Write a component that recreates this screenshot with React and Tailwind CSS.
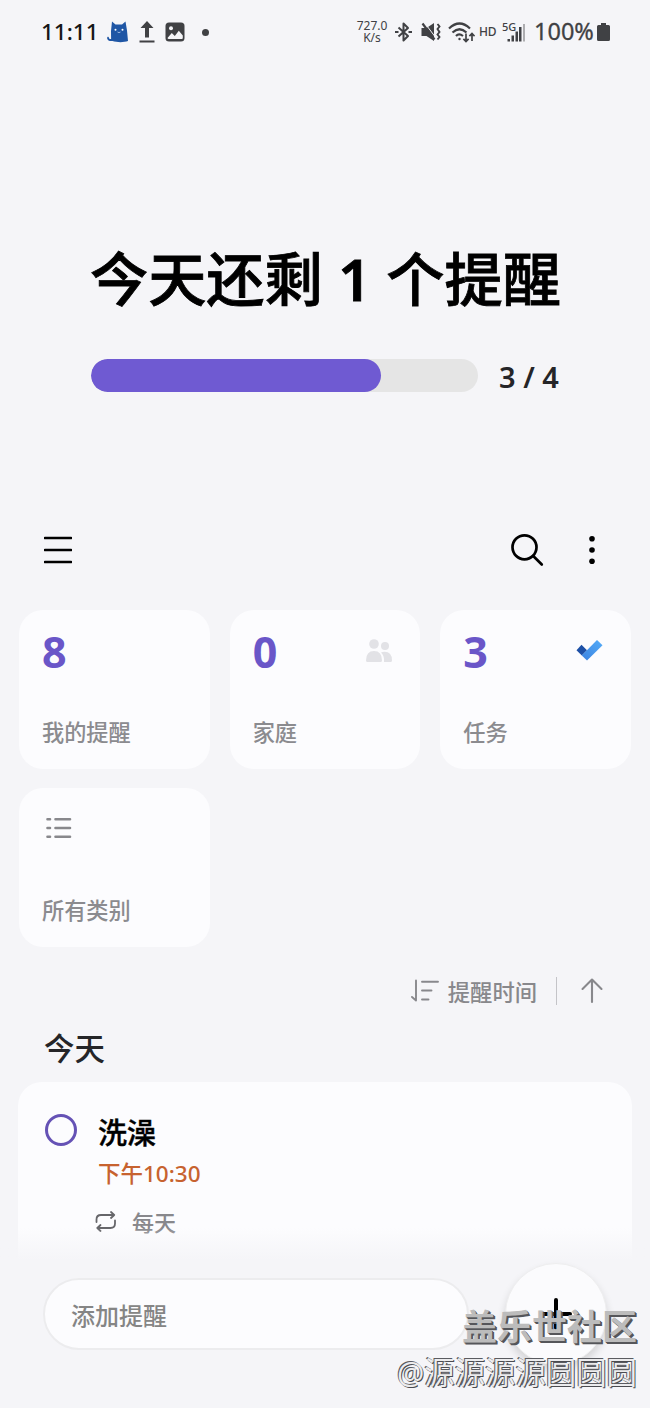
import { useState } from 'react';

const categories = [
  { id: 'mine', label: '我的提醒', count: 8 },
  { id: 'family', label: '家庭', count: 0, icon: 'people' },
  { id: 'tasks', label: '任务', count: 3, icon: 'todo' },
  { id: 'all', label: '所有类别' },
];

function CatIcon() {
  return (
    <svg width="22" height="22" viewBox="0 0 22 22" className="ml-[9px] text-[#1f56a5]">
      <path d="M5 0.500 8.500 3.500h6.500L18.500.5l1.500 9 1 10.500c-4 1.500-11 1.500-15.500 0-3 .2-5-.4-5.400-2.800.1-1.600 1.700-1.800 1.800-.5 0 .9.700 1.300 2.200 1.300L4 10z" fill="currentColor" />
      <circle cx="8.500" cy="8.700" r="1" fill="#fff" />
      <circle cx="15.500" cy="8.700" r="1" fill="#fff" />
      <path d="M10.500 11q1.500 1.300 3 0" stroke="#b9cdec" strokeWidth="0.8" fill="none" />
    </svg>
  );
}

function StatusBar() {
  return (
    <header className="flex h-16 items-center pr-[40px] pl-[41px] text-[#404144]">
      <span className="w-[57px] text-[22.500px] leading-none font-medium whitespace-nowrap text-[#161616]">11:11</span>
      <CatIcon />
      {/* upload */}
      <svg width="18" height="22" viewBox="0 0 18 22" className="ml-[9px]" fill="currentColor">
        <path d="M9 0 15.500 7h-4.500v9.500H7V7H2.500zM1.500 19.400h15v2h-15z" />
      </svg>
      {/* gallery */}
      <svg width="20" height="20" viewBox="0 0 20 20" className="ml-[9px]">
        <rect x="0.5" y="0.5" width="19" height="19" rx="3.5" fill="currentColor" />
        <circle cx="6" cy="6.300" r="2" fill="#f5f5f8" />
        <path d="m2.500 16 4.300-5 3 3 4-5.300 4 4.800V16q0 1-1 1h-13q-1 0-1.300-1z" fill="#f5f5f8" />
      </svg>
      <span className="ml-[17px] size-[7px] rounded-full bg-[#404144]" />

      <div className="ml-auto flex items-center">
        <div className="flex w-8 flex-col items-center text-[12px] leading-[12px]">
          <span>727.0</span>
          <span>K/s</span>
        </div>
        {/* bluetooth */}
        <svg width="17" height="20" viewBox="0 0 17 20" className="ml-[7px]" fill="none" stroke="currentColor" strokeWidth="2" strokeLinejoin="round">
          <path d="M3.500 5.500 13 14l-4.500 4.500v-17L13 6l-9.500 8.500" />
          <path d="M0 10h3.500M13.500 10H17" />
        </svg>
        {/* muted with vibration */}
        <svg width="20" height="20" viewBox="0 0 20 20" className="ml-[9px]" fill="currentColor">
          <path d="M0.500 6h5L13 1v18l-7.500-5h-5z" />
          <path d="m3 0 12 16" stroke="#f5f5f8" strokeWidth="1" />
          <path d="m1.500 1.500 12 16" stroke="currentColor" strokeWidth="2.200" />
          <path d="m16.500 2 2 2.500-2 2.500 2 3-2 2.500 2 2.500-2 2.500" fill="none" stroke="currentColor" strokeWidth="1.900" />
        </svg>
        {/* wifi with traffic arrows */}
        <svg width="27" height="21" viewBox="0 0 27 21" className="ml-[7px]" fill="none" stroke="currentColor" strokeWidth="2.200">
          <path d="M1 6.500q10.500-10 21 0M4.500 10.500q7-6.500 14 0M8 14q3-3.200 7 0" />
          <circle cx="11.500" cy="17" r="1.200" fill="currentColor" stroke="none" />
          <path d="M18 11.500v8m-2.600-2.700 2.600 2.700 2.600-2.700M24 19v-7.500m-2.600 2.700 2.600-2.700 2.600 2.700" strokeWidth="1.700" />
        </svg>
        <span className="ml-[4px] w-[17px] text-[12px] leading-none font-medium tracking-[-0.3px]">HD</span>
        <div className="relative ml-[6px] h-[22px] w-6">
          <span className="absolute top-0 left-0 text-[11px] leading-none font-medium">5G</span>
          <svg width="24" height="22" viewBox="0 0 24 22" fill="currentColor">
            <path d="M5.500 18h2.500v2.500H5.500zM9.500 14.500H12v6H9.500zM13.500 10.500H16v10h-2.500zM17 6h2.500v14.500H17z" />
            <path d="M21 3h2v17.500h-2z" opacity="0.4" />
          </svg>
        </div>
        <span className="ml-[8px] w-[61px] text-[23.500px] leading-none whitespace-nowrap [-webkit-text-stroke:0.3px]">100%</span>
        <svg width="13" height="18" viewBox="0 0 13 18" className="ml-[2px]" fill="currentColor">
          <path d="M4 0h5v2h2.500Q13 2 13 3.500v13Q13 18 11.500 18h-10Q0 18 0 16.500v-13Q0 2 1.500 2H4z" />
        </svg>
      </div>
    </header>
  );
}

function CategoryIcon({ name }) {
  if (name === 'people') {
    return (
      <svg width="26" height="24" viewBox="0 0 26 24" className="mt-[4px] mr-[4px]" fill="#e2e2e6">
        <circle cx="8" cy="5" r="4.800" />
        <circle cx="19" cy="7" r="4" />
        <path d="M0 21.500q0-9.500 8-9.500t8 9.500q0 1.500-1.500 1.500h-13Q0 23 0 21.500zM15 13.500q1.500-.8 3.500-.8 7.500 0 7.500 8.800 0 1.500-1.500 1.500H18v-2q0-5-3-7.500z" />
      </svg>
    );
  }
  if (name === 'todo') {
    return (
      <svg width="27" height="22" viewBox="0 0 27 22" className="mt-[4px] mr-[4px]">
        <defs>
          <linearGradient id="todo" x1="0" y1="1" x2="1" y2="0">
            <stop offset="0" stopColor="#3b82e0" />
            <stop offset="1" stopColor="#54acf8" />
          </linearGradient>
        </defs>
        <path d="M5.500 5.800 11 11.300l-5.200 5.200L.5 11.200z" fill="#1d50a6" />
        <path d="M5.800 16.400 21 1l5.500 5.300L11 21.500z" fill="url(#todo)" />
      </svg>
    );
  }
  return null;
}

function CategoryCard({ item }) {
  return (
    <button className="flex h-[159px] flex-col justify-between rounded-[24px] bg-[#fcfcfe] pt-[25px] pr-6 pb-[22px] pl-[23px] text-left">
      <div className="flex w-full items-start justify-between">
        {item.count !== undefined ? (
          <span className="text-[43px] leading-[34px] font-bold text-[#6a56c8]">{item.count}</span>
        ) : (
          <svg width="26" height="22" viewBox="0 0 26 22" className="mt-1 ml-[4px]" stroke="#88888c" strokeWidth="2.600" strokeLinecap="round">
            <path d="M1.500 2.300h2.500M1.500 11h2.500M1.500 19.700h2.500M9.500 2.300h14.500M9.500 11h14.500M9.500 19.700h14.500" />
          </svg>
        )}
        <CategoryIcon name={item.icon} />
      </div>
      <span className="text-[22.200px] leading-7 font-medium text-[#8b8b8f]">{item.label}</span>
    </button>
  );
}

export default function App() {
  const [done, setDone] = useState(false);
  const completed = 3;
  const total = 4;

  return (
    <div className="relative flex h-[1408px] w-[650px] flex-col overflow-hidden bg-[#f5f5f8] font-['Noto_Sans','Noto_Sans_CJK_SC',sans-serif]">
      <StatusBar />

      <section className="flex h-[453px] flex-col pt-[180px] pr-[88px] pl-[90px]">
        <h1 className="text-[58.200px] leading-[70px] font-medium whitespace-nowrap text-black [-webkit-text-stroke:0.8px_#000]">
          今天还剩 <span className="font-semibold">1</span> 个提醒
        </h1>
        <div className="mt-[45px] ml-px flex h-[33px] items-center">
          <div className="h-[33px] w-[387px] overflow-hidden rounded-full bg-[#e5e5e5]">
            <div className="h-full rounded-full bg-[#6f5ad2]" style={{ width: `${(completed / total) * 100}%` }} />
          </div>
          <span className="mt-[2px] ml-[21px] text-[29px] leading-8 font-semibold whitespace-nowrap text-[#252528]">3 / 4</span>
        </div>
      </section>

      <nav className="flex h-[66px] items-center pr-[52px] pl-[44px]">
        <svg width="28" height="28" viewBox="0 0 28 28" stroke="#000" strokeWidth="2.600" strokeLinecap="round">
          <path d="M1 2h26M1 14h26M1 26h26" />
        </svg>
        <svg width="34" height="34" viewBox="0 0 34 34" className="ml-auto" fill="none" stroke="#000" strokeWidth="2.700" strokeLinecap="round">
          <circle cx="14.500" cy="14.300" r="12" />
          <path d="m23.200 23 8.600 8.500" />
        </svg>
        <svg width="14" height="30" viewBox="0 0 14 30" className="mr-[-1px] ml-[41px]" fill="#000">
          <circle cx="7" cy="3.700" r="2.800" />
          <circle cx="7" cy="15" r="2.800" />
          <circle cx="7" cy="26.300" r="2.800" />
        </svg>
      </nav>

      <section className="mt-[27px] grid grid-cols-3 gap-x-5 gap-y-[19px] px-[19px]">
        {categories.map((item) => (
          <CategoryCard key={item.id} item={item} />
        ))}
      </section>

      <div className="mt-[24px] flex h-10 items-center justify-end pr-[47px] text-[#88888c]">
        <svg width="28" height="24" viewBox="0 0 28 24" fill="none" stroke="currentColor" strokeWidth="1.900" strokeLinecap="round" strokeLinejoin="round">
          <path d="M5 1.500v20l-4-3.500M11 2.800h16M11 11.500h9.500M11 20.500h6.500" />
        </svg>
        <span className="mt-[3px] ml-[9px] text-[22.300px] leading-8 font-medium">提醒时间</span>
        <span className="ml-[19px] h-[28px] w-px bg-[#c4c4c8]" />
        <svg width="22" height="26" viewBox="0 0 22 26" className="ml-[24px]" fill="none" stroke="currentColor" strokeWidth="2.100" strokeLinecap="round" strokeLinejoin="round">
          <path d="M11 24V1.500M1.500 11 11 1.500l9.500 9.500" />
        </svg>
      </div>

      <h2 className="mt-[16px] pl-[44px] text-[30.500px] leading-[42px] font-medium text-[#252528]">今天</h2>

      <article className="mx-[18px] mt-[13px] flex h-[300px] shrink-0 rounded-t-[24px] bg-[#fcfcfe] pt-[32px] pl-[27px]">
        <button
          onClick={() => setDone(!done)}
          className={`size-8 shrink-0 rounded-full border-3 border-[#6552b5] ${done ? 'bg-[#6552b5]' : ''}`}
        />
        <div className="ml-[21px] flex flex-col">
          <h3 className="mt-px text-[29px] leading-[36px] font-medium text-black [-webkit-text-stroke:0.4px_#000]">洗澡</h3>
          <p className="mt-[8px] text-[22.500px] leading-[30px] font-medium text-[#c7622f]">下午10:30</p>
          <div className="mt-[19px] flex items-center text-[#88888c]">
            <svg width="22" height="22" viewBox="0 0 22 22" className="-ml-[3px]" fill="none" stroke="#66666a" strokeWidth="1.800" strokeLinecap="round" strokeLinejoin="round">
              <path d="M1.500 11V8.500q0-4.500 4.500-4.500H19M16 1l3.200 3L16 7M20 9.500V12.500q0 4.500-4.500 4.500H2.500M5.500 14 2.300 17l3.200 3" />
            </svg>
            <span className="ml-[15px] text-[22px] leading-7 font-medium">每天</span>
          </div>
        </div>
      </article>

      {/* bottom bar */}
      <footer className="absolute inset-x-0 bottom-0 flex h-[180px] flex-col">
        <div className="h-8 bg-linear-to-b from-[#f5f5f8]/0 to-[#f5f5f8]" />
        <div className="flex flex-1 items-start bg-[#f5f5f8] pl-[43px]">
          <div className="mt-[18px] flex h-[72px] w-[426px] items-center rounded-full border-2 border-[#ececee] bg-[#fcfcfe] pl-[26px] text-[24px] text-[#858585]">
            <span className="mt-[3px] leading-8 font-medium">添加提醒</span>
          </div>
          <button className="mt-[3px] ml-[36px] flex size-[102px] items-center justify-center rounded-full border border-[#eeeeef] bg-[#fbfbfd] shadow-[0_5px_9px_rgba(0,0,0,0.14)]">
            <svg width="32" height="32" viewBox="0 0 32 32" stroke="#000" strokeWidth="4" strokeLinecap="round">
              <path d="M16 2v28M2 16h28" />
            </svg>
          </button>
        </div>
      </footer>

      <div className="pointer-events-none absolute right-[13px] bottom-[12px] flex flex-col items-end whitespace-nowrap">
        <span className="text-[35px] leading-[46px] font-bold text-[#bcbcbc] [text-shadow:1px_1px_0_#55565a,2px_2px_0_#55565a]">盖乐世社区</span>
        <span className="text-[30.400px] leading-[46px] text-[#ececee] [text-shadow:-1px_-1px_0_#5a5b60,1px_1px_0_#4a4b50]">@源源源源圆圆圆</span>
      </div>
    </div>
  );
}
